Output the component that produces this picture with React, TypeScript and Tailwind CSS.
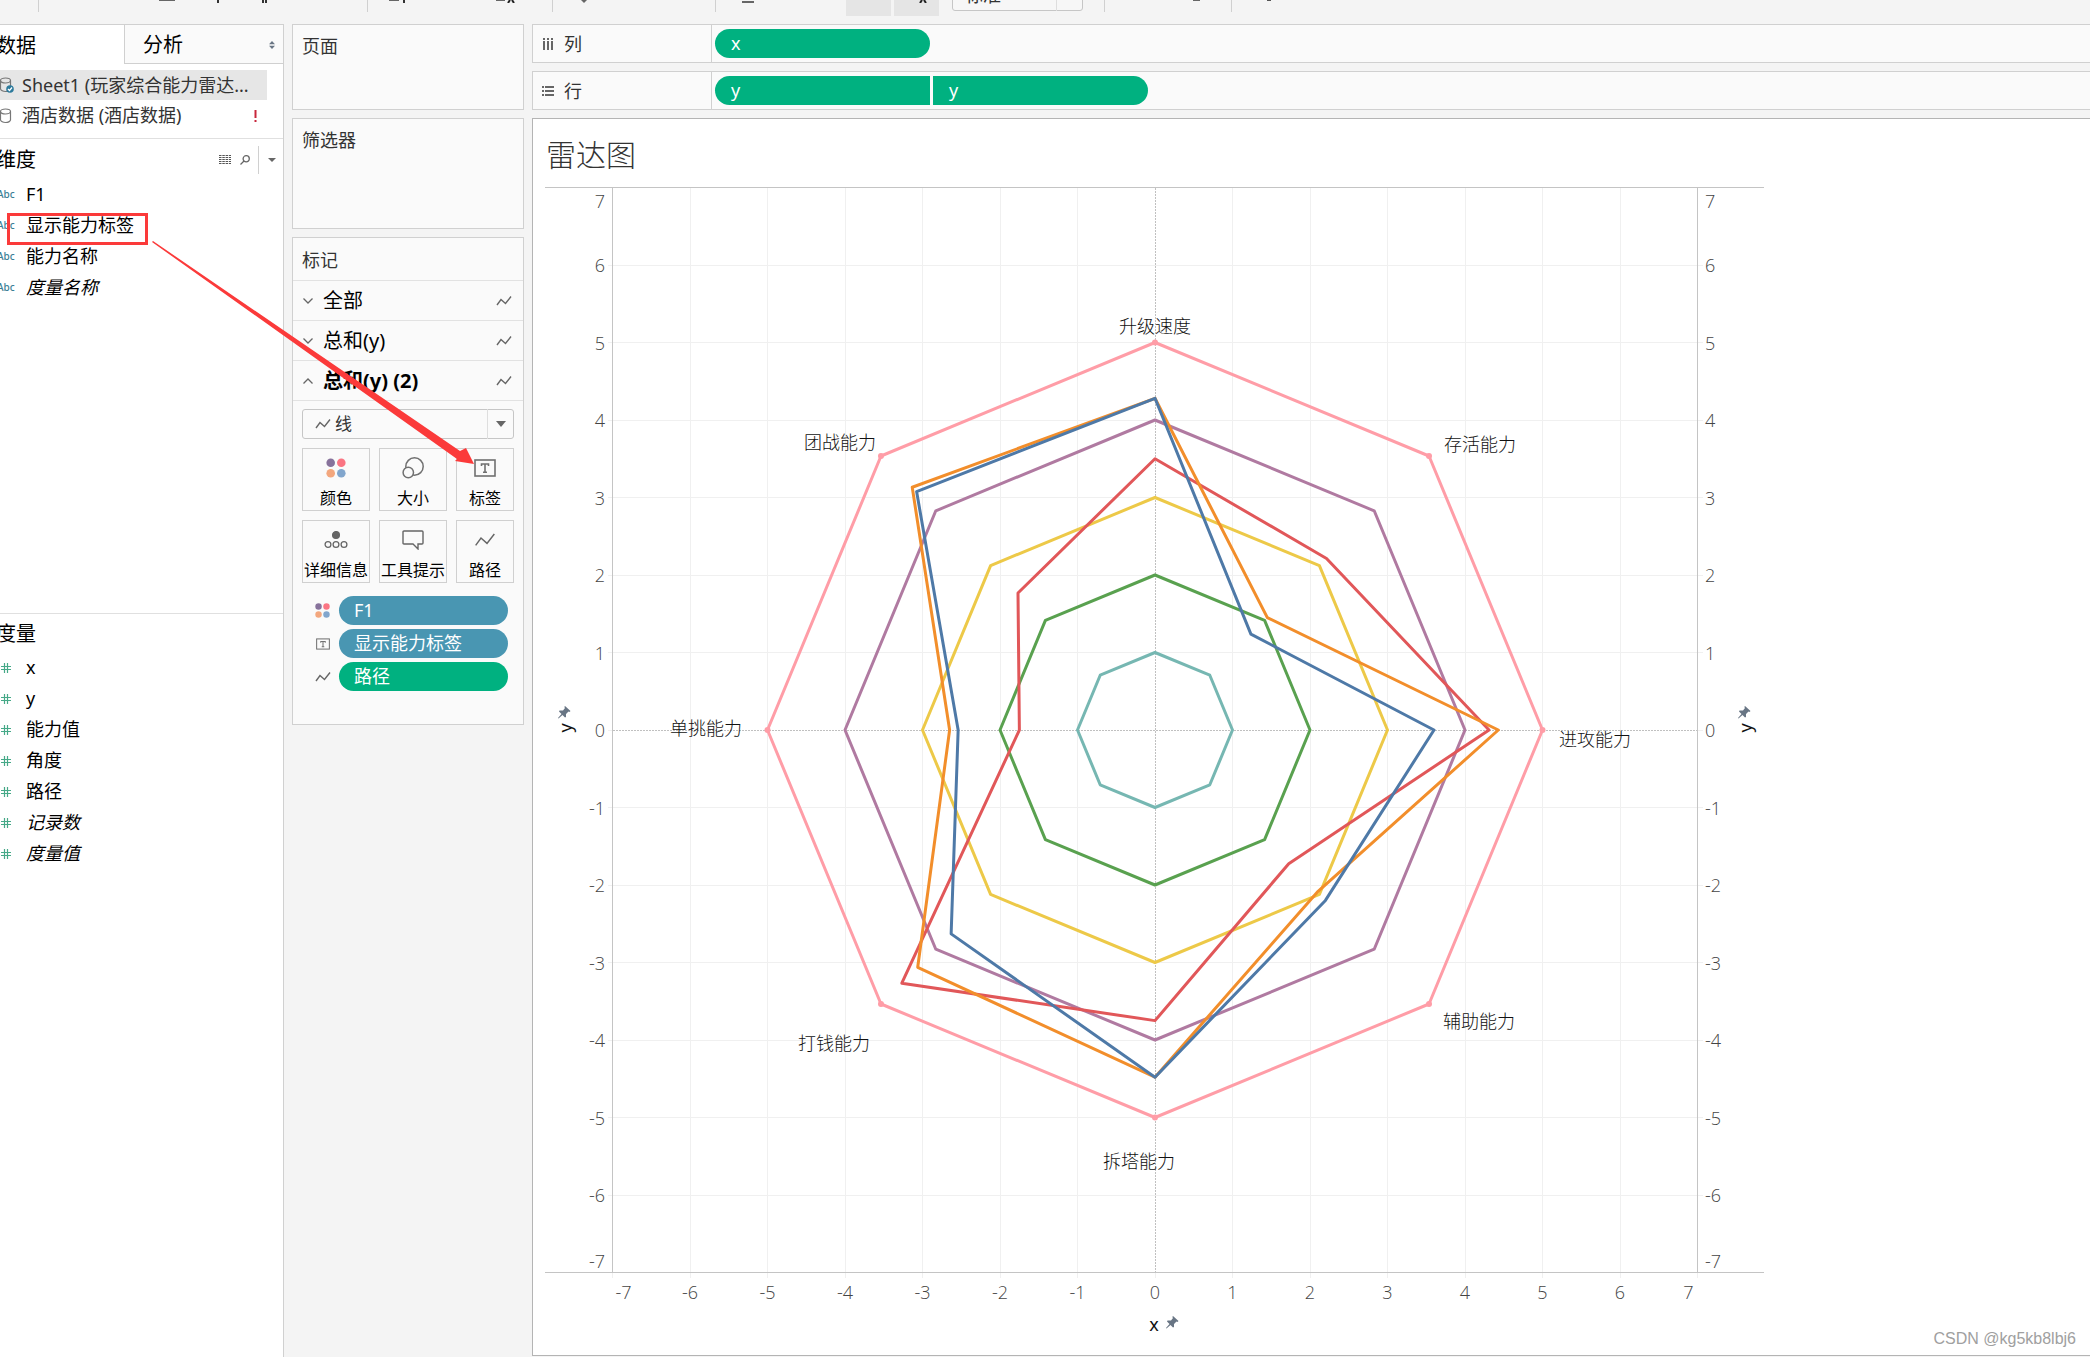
import type { ReactNode } from 'react';

const dimensions = [
  { name: 'F1' },
  { name: '显示能力标签' },
  { name: '能力名称' },
  { name: '度量名称', generated: true },
];

const measures = [
  { name: 'x' },
  { name: 'y' },
  { name: '能力值' },
  { name: '角度' },
  { name: '路径' },
  { name: '记录数', generated: true },
  { name: '度量值', generated: true },
];

// Chart geometry
const UNIT = 77.5;
const CX = 610;
const CY = 543;
const LEFT = CX - 7 * UNIT;
const RIGHT = CX + 7 * UNIT;
const TOP = CY - 7 * UNIT;
const BOTTOM = CY + 7 * UNIT;
const ticks = [-7, -6, -5, -4, -3, -2, -1, 0, 1, 2, 3, 4, 5, 6, 7];

// Radius per spoke, clockwise from the top
const series = [
  { name: 'ring5', color: '#ff9da7', values: [5, 5, 5, 5, 5, 5, 5, 5] },
  { name: 'ring4', color: '#b07aa1', values: [4, 4, 4, 4, 4, 4, 4, 4] },
  { name: 'ring3', color: '#edc948', values: [3, 3, 3, 3, 3, 3, 3, 3] },
  { name: 'ring2', color: '#59a14f', values: [2, 2, 2, 2, 2, 2, 2, 2] },
  { name: 'ring1', color: '#76b7b2', values: [1, 1, 1, 1, 1, 1, 1, 1] },
  { name: 'red', color: '#e15759', values: [3.5, 3.13, 4.31, 2.44, 3.75, 4.62, 1.75, 2.5] },
  { name: 'orange', color: '#f28e2b', values: [4.28, 2.05, 4.43, 2.96, 4.48, 4.33, 2.65, 4.43] },
  { name: 'blue', color: '#4e79a7', values: [4.28, 1.75, 3.6, 3.11, 4.48, 3.72, 2.54, 4.35] },
];

const abilityLabels = [
  { text: '升级速度', x: 610, y: 139 },
  { text: '存活能力', x: 935, y: 257 },
  { text: '进攻能力', x: 1050, y: 552 },
  { text: '辅助能力', x: 934, y: 834 },
  { text: '拆塔能力', x: 594, y: 974 },
  { text: '打钱能力', x: 289, y: 856 },
  { text: '单挑能力', x: 161, y: 541 },
  { text: '团战能力', x: 295, y: 255 },
];

const spoke = (r: number, i: number) => {
  const a = (i * Math.PI) / 4;
  return [CX + r * UNIT * Math.sin(a), CY - r * UNIT * Math.cos(a)];
};

const Pin = ({ x, y }: { x: number; y: number }) => (
  <path
    transform={`translate(${x} ${y})`}
    d="M7 0 L12.500 5 L11.500 6 L10.500 5.500 L8 8 L8 11 L7 11.500 L4.500 9 L0.500 12.500 L0 12 L3.500 8 L1 5.500 L1.500 4.500 L5 4.500 L7 2 L6.300 1 Z"
    fill="#687584"
  />
);

const RadarChart = () => (
  <svg viewBox="0 0 1220 1160" className="block w-[1220px] max-w-full" role="img" aria-label="雷达图">
    <g shapeRendering="crispEdges">
      {ticks.slice(1, -1).map((t) => (
        <g key={t} stroke={t === 0 ? '#c0c0c0' : '#f0f0f0'} strokeDasharray={t === 0 ? '2 1' : undefined}>
          <line x1={CX + t * UNIT} x2={CX + t * UNIT} y1={TOP} y2={BOTTOM} />
          <line x1={LEFT} x2={RIGHT} y1={CY - t * UNIT} y2={CY - t * UNIT} />
        </g>
      ))}
      {ticks.map((t) => (
        <g key={t} stroke="#f0f0f0">
          <line x1={CX + t * UNIT} x2={CX + t * UNIT} y1={BOTTOM} y2={BOTTOM + 5} />
          <line x1={LEFT - 5} x2={LEFT} y1={CY - t * UNIT} y2={CY - t * UNIT} />
          <line x1={RIGHT} x2={RIGHT + 5} y1={CY - t * UNIT} y2={CY - t * UNIT} />
        </g>
      ))}
      <path d={`M0 ${TOP} H1219 M0 ${BOTTOM} H1219 M${LEFT} ${TOP} V${BOTTOM} M${RIGHT} ${TOP} V${BOTTOM}`} stroke="#c4c4c4" fill="none" />
    </g>

    {series.map((s) => (
      <polygon
        key={s.name}
        points={s.values.map((v, i) => spoke(v, i).join(',')).join(' ')}
        fill="none"
        stroke={s.color}
        strokeWidth="3"
        strokeLinejoin="round"
      />
    ))}
    {series[0].values.map((v, i) => {
      const [x, y] = spoke(v, i);
      return <circle key={i} cx={x} cy={y} r="3" fill="#ff9da7" />;
    })}

    <g className="text-[18px] font-light font-['Open_Sans',sans-serif]" fill="#444">
      {ticks.map((t) => {
        // the end labels are pulled inside the frame
        const inset = t === 7 ? 13 : t === -7 ? -12 : 0;
        const y = CY - t * UNIT + inset + 7;
        return (
          <g key={t}>
            <text x="60" y={y} textAnchor="end">{t}</text>
            <text x="1160" y={y}>{t}</text>
            <text x={CX + t * UNIT - (t === 7 ? 9 : t === -7 ? -11 : 0)} y="1112" textAnchor="middle">{t}</text>
          </g>
        );
      })}
    </g>

    <g className="text-[18px]" fill="#111">
      {abilityLabels.map((l) => (
        <text key={l.text} x={l.x} y={l.y + 7} textAnchor="middle" className="font-light">{l.text}</text>
      ))}
      <text x="609" y="1144" textAnchor="middle">x</text>
      <text transform="translate(27 541) rotate(-90)" textAnchor="middle">y</text>
      <text transform="translate(1207 541) rotate(-90)" textAnchor="middle">y</text>
    </g>
    <Pin x={621} y={1129} />
    <Pin x={13} y={519} />
    <Pin x={1193} y={519} />
  </svg>
);

const LineIcon = ({ size = 'small' }: { size?: 'small' | 'large' }) => (
  <svg
    viewBox="0 0 16 12"
    className={size === 'large' ? 'h-4 w-[22px]' : 'h-3 w-4'}
    fill="none"
    stroke="#666"
    strokeWidth={size === 'large' ? 1.1 : 1.4}
  >
    <path d="M1 10 L5 4.500 L9.500 8.500 L15 1.500" />
  </svg>
);

const ColorIcon = ({ className }: { className: string }) => (
  <svg viewBox="0 0 20 20" className={className}>
    <circle cx="4.700" cy="4.700" r="4.300" fill="#87729b" />
    <circle cx="15.300" cy="4.700" r="4.300" fill="#fa7583" />
    <circle cx="4.700" cy="15.300" r="4.300" fill="#f3a77e" />
    <circle cx="15.300" cy="15.300" r="4.300" fill="#82a6cd" />
  </svg>
);

const LabelIcon = ({ className }: { className: string }) => (
  <svg viewBox="0 0 22 18" className={className} fill="none" stroke="#707070">
    <rect x="1" y="1" width="20" height="16" strokeWidth="1.600" />
    <path d="M7.500 7 V5 H14.500 V7 M11 5 V13 M9 13.300 H13" strokeWidth="1.600" />
  </svg>
);

const SizeIcon = () => (
  <svg viewBox="0 0 22 22" className="size-[22px]" fill="#fafafa" stroke="#707070" strokeWidth="1.5">
    <circle cx="12.500" cy="9.500" r="8.700" />
    <circle cx="6.300" cy="15.500" r="5.200" />
  </svg>
);

const DetailIcon = () => (
  <svg viewBox="0 0 24 18" className="h-[18px] w-6" fill="none" stroke="#666" strokeWidth="1.300">
    <circle cx="12" cy="4" r="3.400" fill="#666" />
    <circle cx="4" cy="13.500" r="2.900" />
    <circle cx="12" cy="13.500" r="2.900" />
    <circle cx="20" cy="13.500" r="2.900" />
  </svg>
);

const TooltipIcon = () => (
  <svg viewBox="0 0 22 20" className="h-5 w-[22px]" fill="none" stroke="#666" strokeWidth="1.400">
    <path d="M2 1 H20 Q21 1 21 2 V13 Q21 14 20 14 H16 V19 L11 14 H2 Q1 14 1 13 V2 Q1 1 2 1 Z" />
  </svg>
);

const Chevron = ({ open }: { open?: boolean }) => (
  <svg viewBox="0 0 10 6" className="h-[6px] w-[10px]" fill="none" stroke="#666" strokeWidth="1.300">
    <path d={open ? 'M0.500 5.500 L5 1 L9.500 5.500' : 'M0.500 0.500 L5 5 L9.500 0.500'} />
  </svg>
);

const DataSourceIcon = ({ active }: { active?: boolean }) => (
  <svg viewBox="0 0 14 16" className="h-4 w-[14px] shrink-0" fill="none" stroke="#777" strokeWidth="1.200">
    <ellipse cx="5.500" cy="3.500" rx="5" ry="2.500" />
    <path d="M0.500 3.500 V12 Q1.500 14.500 5.500 14.500 Q9.500 14.500 10.500 12 V3.500" />
    {active && (
      <>
        <circle cx="10" cy="12" r="3.800" fill="#2d7a9c" stroke="none" />
        <path d="M8 12 L9.500 13.500 L12 10.500" stroke="#fff" />
      </>
    )}
  </svg>
);

const Separator = () => <div className="h-3 w-px shrink-0 bg-[#d0d0d0]" />;

// Only the lower edge of the toolbar is scrolled into view
const Toolbar = () => (
  <header className="flex h-6 items-start overflow-hidden">
    <div className="w-[38px] shrink-0" />
    <Separator />
    <div className="flex w-[328px] shrink-0 pl-[120px]">
      <span className="h-px w-4 bg-[#666]" />
      <span className="ml-[42px] h-[3px] w-[2px] bg-[#333]" />
      <span className="ml-[43px] h-[3px] w-[5px] border-x-2 border-[#333]" />
    </div>
    <Separator />
    <div className="flex w-[184px] shrink-0 pl-[21px]">
      <span className="h-px w-[10px] bg-[#666]" />
      <span className="ml-1 h-[3px] w-[2px] bg-[#333]" />
      <span className="ml-[91px] h-px w-[9px] bg-[#666]" />
      <svg viewBox="0 0 8 3" className="ml-[2px] h-[3px] w-2" stroke="#222" strokeWidth="2">
        <path d="M3 0 L1 3 M5 0 L7 3" />
      </svg>
    </div>
    <Separator />
    <div className="flex w-[162px] shrink-0 pl-7">
      <svg viewBox="0 0 6 3" className="h-[3px] w-[6px]" fill="#666">
        <path d="M0 0 H6 L3 3 Z" />
      </svg>
    </div>
    <Separator />
    <div className="flex w-[388px] shrink-0 items-start pl-[26px]">
      <span className="mt-px h-[2px] w-3 bg-[#666]" />
      <button aria-label="突出显示" className="ml-[92px] h-4 w-[45px] bg-[#e5e5e5]" />
      <button aria-label="标记标签" className="ml-[3px] flex h-4 w-[45px] items-start justify-center bg-[#e5e5e5] pl-3">
        <svg viewBox="0 0 8 3" className="h-[3px] w-2" stroke="#222" strokeWidth="2">
          <path d="M3 0 L1 3 M5 0 L7 3" />
        </svg>
      </button>
      <div className="relative -mt-5 ml-[13px]">
        <select aria-label="适合" className="h-[31px] w-[131px] appearance-none rounded-[3px] border border-[#c6c6c6] bg-[#f7f7f7] pl-3 text-[18px] text-[#333]">
          <option>标准</option>
        </select>
        <span className="absolute inset-y-0 right-[26px] w-px bg-[#dedede]" />
      </div>
    </div>
    <Separator />
    <div className="flex w-[126px] shrink-0 pl-[88px]">
      <span className="h-px w-[7px] bg-[#666]" />
    </div>
    <Separator />
    <span className="ml-[35px] h-px w-1 bg-[#555]" />
  </header>
);

const FieldList = ({ fields, icon }: { fields: { name: string; generated?: boolean }[]; icon: ReactNode }) => (
  <ul>
    {fields.map((field) => (
      <li key={field.name} className="flex h-[31px] items-center text-[18px] text-black">
        <span className="w-[26px] shrink-0">{icon}</span>
        <span className={field.generated ? 'italic' : ''}>{field.name}</span>
      </li>
    ))}
  </ul>
);

const DataPane = () => (
  <aside className="flex w-[284px] shrink-0 flex-col overflow-hidden border-t border-r border-[#d0d0d0] bg-white">
    <div className="flex h-[39px] text-[20px] text-black">
      <button className="w-[124px] pt-[2px] pr-[88px] text-right whitespace-nowrap">
        <span className="-ml-1">数据</span>
      </button>
      <button className="flex flex-1 items-center justify-between border-b border-l border-[#d0d0d0] bg-[#fafafa] pt-[2px] pr-2 pl-[18px]">
        分析
        <svg viewBox="0 0 6 8" className="h-2 w-[6px]" fill="#687584">
          <path d="M0 3.200 L3 0 L6 3.200 Z M0 4.800 L3 8 L6 4.800 Z" />
        </svg>
      </button>
    </div>
    <div className="h-[75px] border-b border-[#e0e0e0] pt-[6px] text-[18px] text-[#333]">
      <div className="flex h-[30px] w-[267px] items-center gap-2 bg-[#e6e6e6]">
        <DataSourceIcon active />
        <span className="whitespace-nowrap">Sheet1 (玩家综合能力雷达...</span>
      </div>
      <div className="flex h-[31px] w-[267px] items-center gap-2 pr-[10px]">
        <DataSourceIcon />
        <span className="flex-1 whitespace-nowrap">酒店数据 (酒店数据)</span>
        <svg viewBox="0 0 3 12" className="h-3 w-[3px]" fill="#c8273c">
          <path d="M0.500 0 H2.500 V8 H0.500 Z M0.500 10 H2.500 V12 H0.500 Z" />
        </svg>
      </div>
    </div>
    <section className="h-[475px] shrink-0 border-b border-[#e0e0e0]">
      <div className="flex h-10 items-center pt-px">
        <h2 className="-ml-1 flex-1 pt-px text-[20px] text-black">维度</h2>
        <button aria-label="查看数据">
          <svg viewBox="0 0 12 9" className="h-[9px] w-3" stroke="#555" strokeDasharray="2.500 0.800" shapeRendering="geometricPrecision">
            <path d="M0 0.500 H12 M0 2.500 H12 M0 4.500 H12 M0 6.500 H12 M0 8.500 H12" />
          </svg>
        </button>
        <button aria-label="查找字段" className="ml-[9px]">
          <svg viewBox="0 0 10 10" className="size-[10px]" fill="none" stroke="#666" strokeWidth="1.300">
            <circle cx="6.200" cy="3.800" r="3.100" />
            <path d="M4 6 L0.500 9.500" />
          </svg>
        </button>
        <span className="mr-[9px] ml-2 h-7 w-px bg-[#d0d0d0]" />
        <button aria-label="菜单" className="mr-[7px]">
          <svg viewBox="0 0 8 4" className="h-1 w-2" fill="#666">
            <path d="M0 0 H8 L4 4 Z" />
          </svg>
        </button>
      </div>
      <FieldList fields={dimensions} icon={<span className="-ml-[3px] block text-[10px] font-medium text-[#3b7f96]">Abc</span>} />
    </section>
    <section>
      <h2 className="-ml-1 h-[38px] text-[20px] leading-[40px] text-black">度量</h2>
      <FieldList
        fields={measures}
        icon={
          <svg viewBox="0 0 10 10" className="ml-px size-[10px]" stroke="#46a988" strokeWidth="1.200">
            <path d="M0 3.500 H10 M0 6.500 H10 M3.500 0 V10 M6.500 0 V10" />
          </svg>
        }
      />
    </section>
  </aside>
);

const MarkButton = ({ label, children }: { label: string; children: ReactNode }) => (
  <button className="flex h-[63px] flex-col items-center border border-[#d0d0d0] bg-[#fafafa] text-[16px] text-black">
    <span className="flex h-[38px] items-center">{children}</span>
    <span className="leading-[22px] whitespace-nowrap">{label}</span>
  </button>
);

const EncodingPill = ({ icon, label, color }: { icon: ReactNode; label: string; color: string }) => (
  <div className="flex items-center">
    <span className="flex w-[37px] justify-center pl-1">{icon}</span>
    <button className={`h-[29px] w-[169px] rounded-full pl-[15px] text-left text-[18px] leading-[29px] text-white ${color}`}>{label}</button>
  </div>
);

const MarksCard = () => (
  <section className="h-[488px] border border-[#d0d0d0] bg-[#fafafa]">
    <h2 className="h-[43px] border-b border-[#e2e2e2] pl-[9px] text-[18px] leading-[44px] text-[#333]">标记</h2>
    {['全部', '总和(y)', '总和(y) (2)'].map((name, i) => (
      <button
        key={name}
        className={`flex h-10 w-full items-center border-b border-[#e2e2e2] pr-[11px] pl-[10px] text-[20px] text-black ${i === 2 ? 'font-bold' : ''}`}
      >
        <Chevron open={i === 2} />
        <span className="ml-[10px] flex-1 text-left">{name}</span>
        <LineIcon />
      </button>
    ))}
    <div className="px-[9px] pt-2">
      <div className="relative">
        <select aria-label="标记类型" className="h-[30px] w-full appearance-none rounded-[3px] border border-[#c6c6c6] bg-[#fafafa] pl-8 text-[17px] text-[#333]">
          <option>线</option>
        </select>
        <span className="pointer-events-none absolute inset-y-0 left-[13px] flex items-center"><LineIcon /></span>
        <span className="pointer-events-none absolute inset-y-0 right-0 flex w-[27px] items-center justify-center border-l border-[#dedede]">
          <svg viewBox="0 0 10 6" className="h-[6px] w-[10px]" fill="#666">
            <path d="M0 0 H10 L5 6 Z" />
          </svg>
        </span>
      </div>
      <div className="mt-[9px] grid grid-cols-[68px_68px_58px] gap-[9px]">
        <MarkButton label="颜色"><ColorIcon className="size-5" /></MarkButton>
        <MarkButton label="大小"><SizeIcon /></MarkButton>
        <MarkButton label="标签"><LabelIcon className="h-[18px] w-[22px]" /></MarkButton>
        <MarkButton label="详细信息"><DetailIcon /></MarkButton>
        <MarkButton label="工具提示"><TooltipIcon /></MarkButton>
        <MarkButton label="路径"><LineIcon size="large" /></MarkButton>
      </div>
      <div className="mt-[13px] flex flex-col gap-1">
        <EncodingPill icon={<ColorIcon className="size-[15px]" />} label="F1" color="bg-[#4996b2]" />
        <EncodingPill icon={<LabelIcon className="h-3 w-[14px]" />} label="显示能力标签" color="bg-[#4996b2]" />
        <EncodingPill icon={<LineIcon />} label="路径" color="bg-[#00b180]" />
      </div>
    </div>
  </section>
);

const Shelf = ({ icon, label, children }: { icon: ReactNode; label: string; children: ReactNode }) => (
  <div className="flex h-[39px] border-y border-l border-[#d0d0d0] bg-[#fafafa]">
    <div className="flex w-[179px] items-center gap-[10px] border-r border-[#d0d0d0] pt-px pl-[9px] text-[18px] text-[#333]">
      {icon}
      {label}
    </div>
    <div className="flex items-center gap-[3px] pl-[3px]">{children}</div>
  </div>
);

const ShelfPill = ({ label, shape }: { label: string; shape: string }) => (
  <button className={`h-[29px] w-[215px] bg-[#00b180] pl-4 text-left text-[18px] leading-[29px] text-white ${shape}`}>{label}</button>
);

export default function App() {
  return (
    <div className="relative flex min-h-screen flex-col overflow-hidden bg-[#f4f4f4] font-['Noto_Sans','Noto_Sans_CJK_SC',sans-serif]">
      <Toolbar />
      <div className="flex flex-1">
        <DataPane />

        <div className="ml-2 flex w-[232px] shrink-0 flex-col gap-2">
          <section className="h-[86px] border border-[#d0d0d0] bg-[#fafafa] pt-2 pl-[9px] text-[18px] text-[#333]">页面</section>
          <section className="h-[111px] border border-[#d0d0d0] bg-[#fafafa] pt-2 pl-[9px] text-[18px] text-[#333]">筛选器</section>
          <MarksCard />
        </div>

        <main className="ml-2 flex min-w-0 flex-1 flex-col gap-2">
          <Shelf
            label="列"
            icon={
              <svg viewBox="0 0 12 12" className="size-3" fill="#666">
                <path d="M1 0 h2 v2 h-2 Z M5 0 h2 v2 h-2 Z M9 0 h2 v2 h-2 Z M1 3 h2 v9 h-2 Z M5 3 h2 v9 h-2 Z M9 3 h2 v9 h-2 Z" />
              </svg>
            }
          >
            <ShelfPill label="x" shape="rounded-full" />
          </Shelf>
          <Shelf
            label="行"
            icon={
              <svg viewBox="0 0 12 12" className="size-3" fill="#666">
                <path d="M0 1 h2 v2 h-2 Z M0 5 h2 v2 h-2 Z M0 9 h2 v2 h-2 Z M3 1 h9 v2 h-9 Z M3 5 h9 v2 h-9 Z M3 9 h9 v2 h-9 Z" />
              </svg>
            }
          >
            <ShelfPill label="y" shape="rounded-l-full" />
            <ShelfPill label="y" shape="rounded-r-full" />
          </Shelf>
          <section className="relative mb-px flex-1 border-y border-l border-[#b4b4b4] bg-white pl-3">
            <h1 className="h-[68px] pl-px text-[30px] leading-[72px] font-light text-[#333]">雷达图</h1>
            <RadarChart />
            <span className="absolute right-[14px] bottom-1 text-[16px] text-[#a0a0a0] font-['Liberation_Sans',sans-serif]">CSDN @kg5kb8lbj6</span>
          </section>
        </main>
      </div>

      {/* Drag hint from the dimension to the label button */}
      <div className="pointer-events-none absolute top-[213px] left-[7px] h-8 w-[141px] border-[3px] border-[#fb3a3a]" />
      <svg viewBox="0 0 322 224" className="pointer-events-none absolute top-[241px] left-[152px] h-[224px] w-[322px]" fill="#fb3a3a">
        <path d="M0 1 L1 0 L308 210 L314 207 L322 223 L303 220 L305 218 Z" />
      </svg>
    </div>
  );
}
